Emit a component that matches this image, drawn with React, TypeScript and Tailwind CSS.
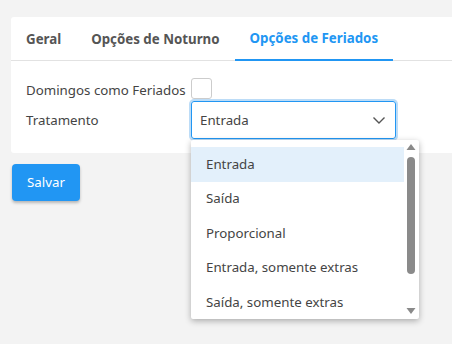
import { useState } from "react";

const opcoes = [
    "Entrada",
    "Saída",
    "Proporcional",
    "Entrada, somente extras",
    "Saída, somente extras",
];

export default function App() {
    const [aba] = useState(2);
    const [selecionado] = useState("Entrada");

    const abas = ["Geral", "Opções de Noturno", "Opções de Feriados"];

    return (
        <div
            className="w-[452px] h-[344px] bg-[#f3f3f3] overflow-hidden pt-[17px] pl-[11px]"
            style={{ fontFamily: '"Noto Sans", "Open Sans", sans-serif' }}
        >
            <div className="bg-white rounded-l-[3px] h-[136px]">
                {/* abas */}
                <div className="flex h-[44px] border-b border-[#e2e2e2] text-[13.3px] font-bold whitespace-nowrap">
                    {abas.map((a, i) => (
                        <div
                            key={a}
                            className={
                                i === aba
                                    ? "flex items-center px-[15px] pt-[2px] -mb-px border-b-2 border-[#2196f3] text-[#2196f3]"
                                    : "flex items-center px-[15px] pt-[2px] text-[#555]"
                            }
                        >
                            {a}
                        </div>
                    ))}
                </div>

                <div className="pl-[15px] pt-[17px] text-[13.3px] text-[#444] whitespace-nowrap">
                    <div className="flex items-center h-[21px]">
                        <span className="w-[165px] pt-[4px]">Domingos como Feriados</span>
                        <span className="w-[21px] h-[21px] rounded-[3px] border border-[#ccc] bg-white" />
                    </div>
                    <div className="flex items-center mt-[2px] relative">
                        <span className="w-[165px] pt-[1px]">Tratamento</span>
                        <div className="relative">
                            <div className="w-[205px] h-[38px] rounded-[3px] border border-[#2196f3] shadow-[0_0_0_2px_#bcdcf7] flex items-center justify-between pl-[8px] pr-[8px] text-[#444]">
                                <span className="pt-[1px]">{selecionado}</span>
                                <svg width="16" height="16" viewBox="0 0 16 16" fill="none" stroke="#555" strokeWidth="1.4">
                                    <path d="M2.5 5.5 L8 11 L13.5 5.5" />
                                </svg>
                            </div>
                            {/* lista suspensa */}
                            <div className="absolute left-0 top-[39px] w-[228px] h-[179px] bg-white rounded-[2px] shadow-[0_2px_6px_rgba(0,0,0,0.3)] pt-[7px] z-10">
                                {opcoes.map((o) => (
                                    <div
                                        key={o}
                                        className={
                                            "h-[34.5px] flex items-center pl-[15px] pt-[1px] w-[213px] text-[#444] " +
                                            (o === selecionado ? "bg-[#e3f0fb]" : "")
                                        }
                                    >
                                        {o}
                                    </div>
                                ))}
                                <div className="absolute right-[3px] top-[3px] bottom-[4px] w-[10px] flex flex-col items-center">
                                    <svg width="10" height="7" viewBox="0 0 10 7">
                                        <path d="M0.5 7 L5 1 L9.5 7 Z" fill="#8a8a8a" />
                                    </svg>
                                    <div className="w-[8px] h-[117px] mt-[7px] rounded-full bg-[#8a8a8a]" />
                                    <div className="flex-1" />
                                    <svg width="10" height="7" viewBox="0 0 10 7">
                                        <path d="M0.5 0 L9.5 0 L5 6 Z" fill="#8a8a8a" />
                                    </svg>
                                </div>
                            </div>
                        </div>
                    </div>
                </div>
            </div>

            <button className="mt-[11px] ml-[1px] w-[68px] h-[37px] rounded-[4px] bg-[#2196f3] text-white text-[13.3px] shadow-[0_2px_3px_rgba(0,0,0,0.25)]">
                Salvar
            </button>
        </div>
    );
}
